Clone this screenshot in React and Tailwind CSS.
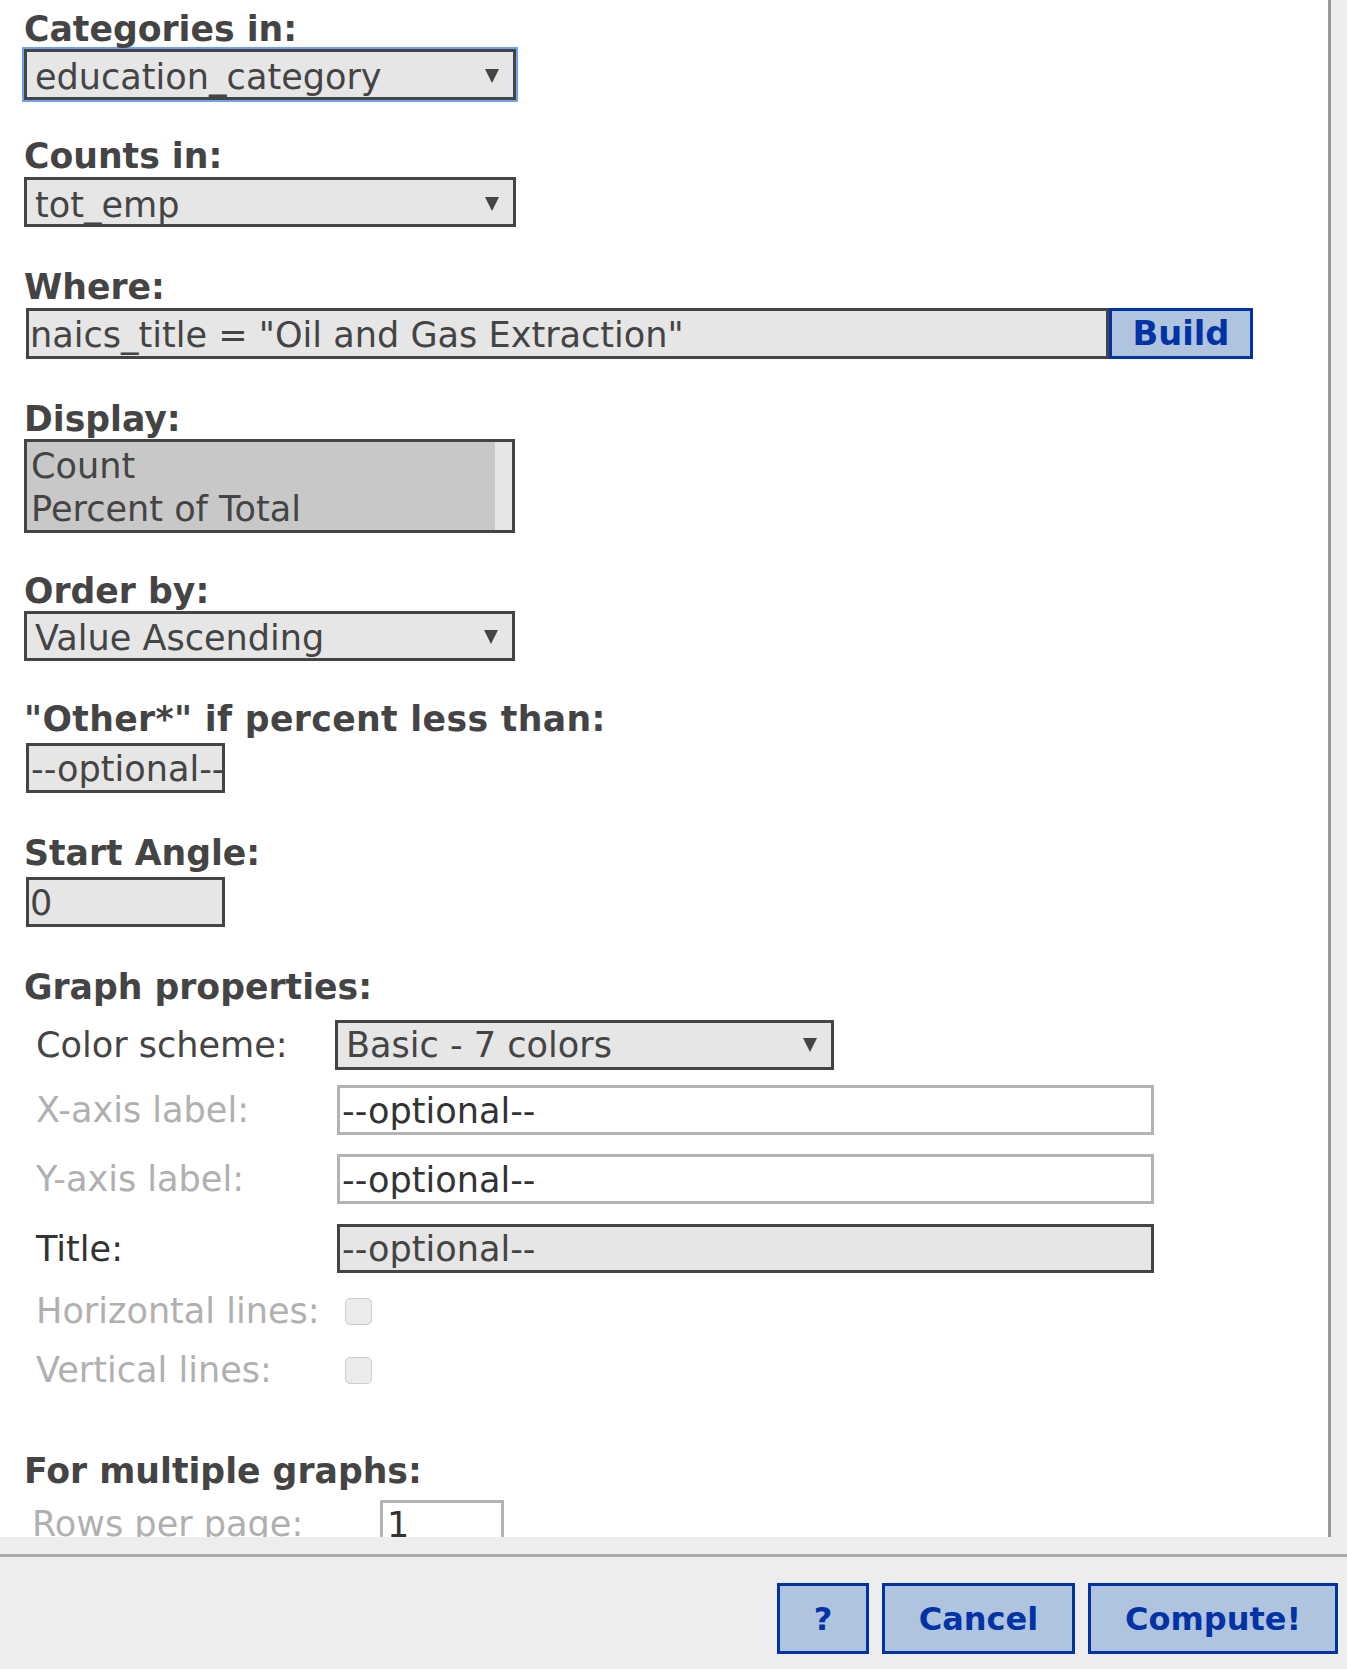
import React from "react";

function Arrow() {
  return (
    <svg width="14" height="15" viewBox="0 0 14 15" className="shrink-0 self-center -mt-[3px]">
      <path d="M0 1H14L7 15Z" fill="#444" />
    </svg>
  );
}

function Select({ text, className }) {
  return (
    <div
      className={
        "flex items-start justify-between border-[3px] border-[#444] bg-[#e6e6e6] pl-[8px] pr-[14px] leading-[40px] whitespace-nowrap overflow-hidden " +
        className
      }
    >
      <span>{text}</span>
      <Arrow />
    </div>
  );
}

function Label({ children, className = "" }) {
  return (
    <div className={"font-bold text-[34.67px] h-[40px] leading-[40px] whitespace-nowrap " + className}>
      {children}
    </div>
  );
}

function Checkbox() {
  return <div className="w-[27px] h-[27px] ml-[10px] rounded-[5px] border-[1.5px] border-[#cdcdcd] bg-[#ebebeb]" />;
}

export default function App() {
  return (
    <div className="w-[1347px] h-[1669px] flex flex-col bg-[#ededed] font-['DejaVu_Sans',Verdana,sans-serif] text-[35.1px] text-[#444] leading-[40px]">
      <div className="flex h-[1537px] shrink-0">
        <div className="w-[1328px] h-full bg-white overflow-hidden pl-[24px] pt-[9px]">
          {/* Categories in */}
          <Label>Categories in:</Label>
          <Select
            text="education_category"
            className="w-[492px] h-[51px] pt-[5px] shadow-[0_0_0_2px_#6fa3ef]"
          />

          {/* Counts in */}
          <Label className="mt-[36px]">Counts in:</Label>
          <Select text="tot_emp" className="mt-[1px] w-[492px] h-[50px] pt-[5px]" />

          {/* Where */}
          <Label className="mt-[40px]">Where:</Label>
          <div className="mt-[1px] flex">
            <div className="ml-[2px] w-[1083px] h-[51px] border-[3px] border-[#444] bg-[#e6e6e6] pl-[1px] pt-[4px] leading-[40px] whitespace-nowrap overflow-hidden">
              naics_title = "Oil and Gas Extraction"
            </div>
            <button className="w-[144px] h-[51px] border-[3px] border-[#0033a6] bg-[#b0c4de] text-[#0033a6] font-bold text-[33.7px] leading-[40px] flex items-center justify-center">
              Build
            </button>
          </div>

          {/* Display */}
          <Label className="mt-[40px]">Display:</Label>
          <div className="w-[491px] h-[94px] border-[3px] border-[#444] bg-[#e6e6e6] flex">
            <div className="flex-1 bg-[#c8c8c8] pl-[4px] pt-[2px] leading-[43px] whitespace-nowrap overflow-hidden">
              <div>Count</div>
              <div>Percent of Total</div>
            </div>
            <div className="w-[17px]" />
          </div>

          {/* Order by */}
          <Label className="mt-[38px]">Order by:</Label>
          <Select text="Value Ascending" className="w-[491px] h-[50px] pt-[4px]" />

          {/* Other */}
          <Label className="mt-[38px] tracking-[0.35px]">"Other*" if percent less than:</Label>
          <div className="mt-[4px] ml-[2px] w-[199px] h-[50px] border-[3px] border-[#444] bg-[#e6e6e6] pl-[2px] pt-[3px] leading-[40px] whitespace-nowrap overflow-hidden">
            --optional--
          </div>

          {/* Start Angle */}
          <Label className="mt-[40px]">Start Angle:</Label>
          <div className="mt-[4px] ml-[2px] w-[199px] h-[50px] border-[3px] border-[#444] bg-[#e6e6e6] pl-[1px] pt-[3px] leading-[40px] whitespace-nowrap overflow-hidden">
            0
          </div>

          {/* Graph properties */}
          <Label className="mt-[40px]">Graph properties:</Label>
          <div className="pl-[12px]">
            <div className="mt-[13px] flex items-center h-[50px]">
              <div className="w-[299px] text-[#444] whitespace-nowrap">Color scheme:</div>
              <Select text="Basic - 7 colors" className="w-[499px] h-[50px] pt-[2px]" />
            </div>
            <div className="mt-[15px] flex items-center h-[50px]">
              <div className="w-[299px] text-[#b0b0b0] whitespace-nowrap">X-axis label:</div>
              <div className="ml-[2px] w-[817px] h-[50px] border-[3px] border-[#b3b3b3] bg-white pl-[2px] pt-[3px] text-[#333] whitespace-nowrap overflow-hidden">
                --optional--
              </div>
            </div>
            <div className="mt-[19px] flex items-center h-[50px]">
              <div className="w-[299px] text-[#b0b0b0] whitespace-nowrap">Y-axis label:</div>
              <div className="ml-[2px] w-[817px] h-[50px] border-[3px] border-[#b3b3b3] bg-white pl-[2px] pt-[3px] text-[#333] whitespace-nowrap overflow-hidden">
                --optional--
              </div>
            </div>
            <div className="mt-[20px] flex items-center h-[49px]">
              <div className="w-[299px] text-[#333] whitespace-nowrap">Title:</div>
              <div className="ml-[2px] w-[817px] h-[49px] border-[3px] border-[#444] bg-[#e6e6e6] pl-[2px] pt-[2px] whitespace-nowrap overflow-hidden">
                --optional--
              </div>
            </div>
            <div className="mt-[18px] flex items-center h-[40px]">
              <div className="w-[299px] text-[#b0b0b0] whitespace-nowrap">Horizontal lines:</div>
              <Checkbox />
            </div>
            <div className="mt-[19px] flex items-center h-[40px]">
              <div className="w-[299px] text-[#b0b0b0] whitespace-nowrap">Vertical lines:</div>
              <Checkbox />
            </div>
          </div>

          {/* For multiple graphs */}
          <Label className="mt-[61px]">For multiple graphs:</Label>
          <div className="mt-[9px] flex pl-[8px]">
            <div className="w-[348px] pt-[4px] text-[#b0b0b0] whitespace-nowrap">Rows per page:</div>
            <div className="w-[124px] h-[50px] border-[3px] border-[#b3b3b3] bg-white pl-[4px] pt-[2px] text-[#333]">
              1
            </div>
          </div>
        </div>
        <div className="w-[3px] h-full bg-[#999]" />
        <div className="flex-1" />
      </div>

      <div className="flex-1 flex flex-col">
        <div className="h-[17px]" />
        <div className="h-[3px] bg-[#aaa]" />
        <div className="flex justify-end gap-[13px] pr-[9px] pt-[26px]">
          <button className="w-[92px] h-[71px] border-[3px] border-[#0033a6] bg-[#b0c4de] text-[#0033a6] font-bold text-[32px] flex items-center justify-center">
            ?
          </button>
          <button className="w-[193px] h-[71px] border-[3px] border-[#0033a6] bg-[#b0c4de] text-[#0033a6] font-bold text-[32px] flex items-center justify-center">
            Cancel
          </button>
          <button className="w-[250px] h-[71px] border-[3px] border-[#0033a6] bg-[#b0c4de] text-[#0033a6] font-bold text-[32px] flex items-center justify-center">
            Compute!
          </button>
        </div>
      </div>
    </div>
  );
}
